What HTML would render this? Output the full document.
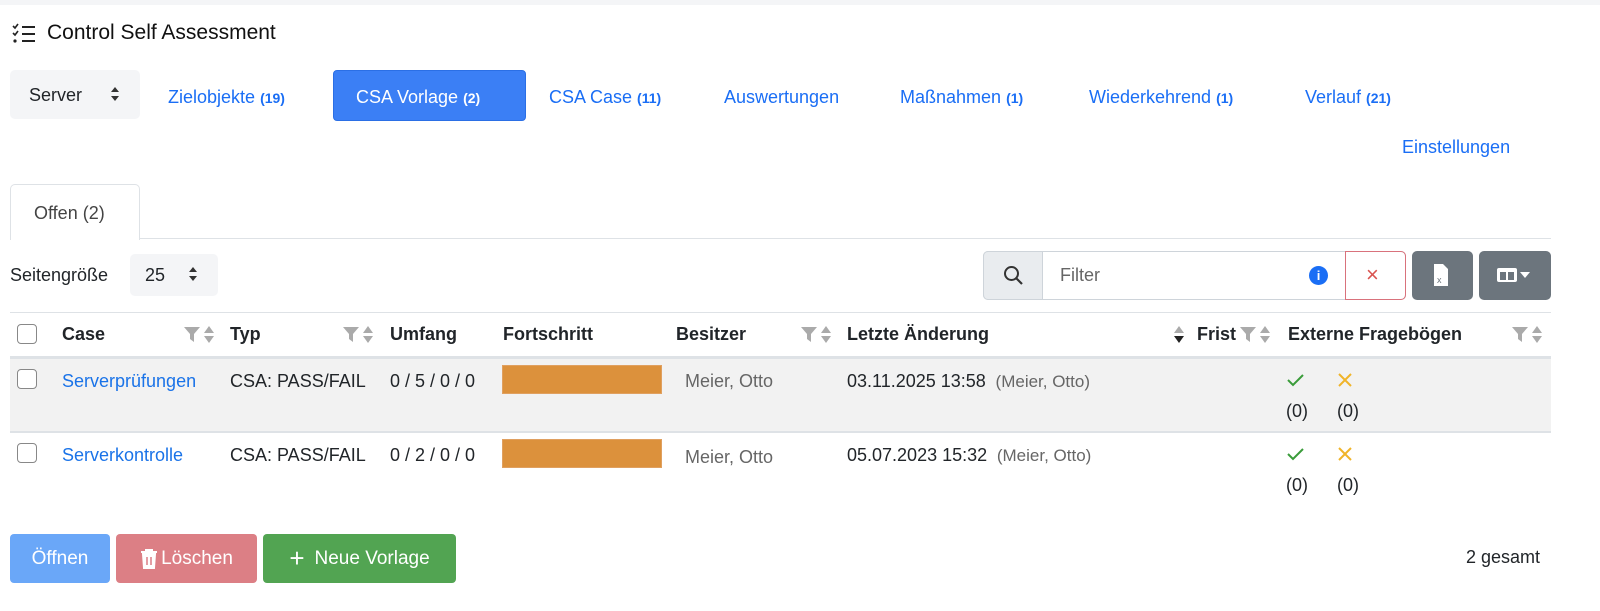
<!DOCTYPE html>
<html><head><meta charset="utf-8"><style>
*{box-sizing:border-box;margin:0;padding:0}
body{width:1600px;height:611px;background:#fff;font-family:"Liberation Sans",Arial,sans-serif;color:#212529;position:relative;overflow:hidden;font-size:18px}
.a{position:absolute;white-space:nowrap}
.blue{color:#1a73e8}
.nav{color:#1a6ef5;font-size:18px}
.nav b{font-size:14px}
.th{font-weight:bold;font-size:18px}
.cb{position:absolute;width:20px;height:20px;border:1.5px solid #888;border-radius:4px;background:#fff}
.btn{position:absolute;border-radius:4px;color:#fff;font-size:19px;display:flex;align-items:center;justify-content:center}
</style></head><body>
<div class="a" style="left:0;top:0;width:1600px;height:5px;background:#f4f5f7"></div>
<svg class="a" style="left:12px;top:23px" width="26" height="22" viewBox="0 0 26 22"><path d="M1 3l2 2 3-4M1 10l2 2 3-4" stroke="#222" stroke-width="1.6" fill="none"/><circle cx="3" cy="18" r="1.6" fill="#222"/><path d="M10 4h13M10 11h13M10 18h13" stroke="#222" stroke-width="2"/></svg>
<div class="a" style="left:47px;top:21px;font-size:21px;color:#111">Control Self Assessment</div>

<div class="a" style="left:10px;top:70px;width:130px;height:49px;background:#f4f5f7;border-radius:5px"></div>
<div class="a" style="left:29px;top:85px">Server</div>
<svg class="a" style="left:109px;top:86px" width="12" height="16"><path d="M6 1l4 5H2zM6 15l4-5H2z" fill="#333"/></svg>
<div class="a nav" style="left:168px;top:87px">Zielobjekte <b>(19)</b></div>
<div class="a" style="left:333px;top:70px;width:193px;height:51px;background:#3b7ff5;border-radius:4px;border:1px solid #2b6fe5"></div>
<div class="a" style="left:356px;top:87px;color:#fff">CSA Vorlage <b style="font-size:14px">(2)</b></div>
<div class="a nav" style="left:549px;top:87px">CSA Case <b>(11)</b></div>
<div class="a nav" style="left:724px;top:87px">Auswertungen</div>
<div class="a nav" style="left:900px;top:87px">Maßnahmen <b>(1)</b></div>
<div class="a nav" style="left:1089px;top:87px">Wiederkehrend <b>(1)</b></div>
<div class="a nav" style="left:1305px;top:87px">Verlauf <b>(21)</b></div>
<div class="a nav" style="left:1402px;top:137px">Einstellungen</div>

<div class="a" style="left:10px;top:238px;width:1541px;height:1px;background:#dee2e6"></div>
<div class="a" style="left:10px;top:184px;width:130px;height:56px;border:1px solid #dee2e6;border-bottom:none;border-radius:5px 5px 0 0;background:#fff"></div>
<div class="a" style="left:34px;top:203px;color:#444">Offen (2)</div>

<div class="a" style="left:10px;top:265px">Seitengröße</div>
<div class="a" style="left:130px;top:254px;width:88px;height:42px;background:#f4f5f7;border-radius:5px"></div>
<div class="a" style="left:145px;top:265px">25</div>
<svg class="a" style="left:187px;top:266px" width="12" height="16"><path d="M6 1l4 5H2zM6 15l4-5H2z" fill="#333"/></svg>

<div class="a" style="left:983px;top:251px;width:423px;height:49px;border:1px solid #ced4da;border-radius:5px;background:#fff"></div>
<div class="a" style="left:983px;top:251px;width:60px;height:49px;background:#e9ecef;border:1px solid #ced4da;border-radius:5px 0 0 5px"></div>
<svg class="a" style="left:1003px;top:265px" width="22" height="22"><circle cx="8.5" cy="8.5" r="6.5" stroke="#333" stroke-width="2" fill="none"/><path d="M13 13l6 6" stroke="#333" stroke-width="2.2"/></svg>
<div class="a" style="left:1060px;top:265px;color:#666">Filter</div>
<div class="a" style="left:1309px;top:266px;width:19px;height:19px;border-radius:50%;background:#1a6ef5;color:#fff;font-size:13px;font-weight:bold;text-align:center;line-height:19px">i</div>
<div class="a" style="left:1345px;top:251px;width:61px;height:49px;border:1px solid #d9727c;border-radius:0 5px 5px 0"></div>
<div class="a" style="left:1366px;top:262px;color:#d9534f;font-size:22px">×</div>
<div class="a" style="left:1412px;top:251px;width:61px;height:49px;background:#6c757d;border-radius:5px"></div>
<svg class="a" style="left:1433px;top:263px" width="16" height="24"><path d="M1 1h9l5 5v17H1z" fill="#fff"/><text x="4" y="20" font-size="9" fill="#6c757d" font-family="Liberation Sans">x</text></svg>
<div class="a" style="left:1479px;top:251px;width:72px;height:49px;background:#6c757d;border-radius:5px"></div>
<svg class="a" style="left:1496px;top:266px" width="40" height="18"><rect x="1" y="2" width="20" height="14" rx="2" fill="#fff"/><rect x="4" y="6" width="6" height="8" fill="#6c757d"/><rect x="12" y="6" width="6" height="8" fill="#6c757d"/><path d="M24 6h10l-5 6z" fill="#fff"/></svg>

<div class="a" style="left:10px;top:312px;width:1541px;height:1px;background:#dee2e6"></div>
<div class="cb" style="left:17px;top:324px"></div>
<div class="a th" style="left:62px;top:324px">Case</div>
<div class="a th" style="left:230px;top:324px">Typ</div>
<div class="a th" style="left:390px;top:324px">Umfang</div>
<div class="a th" style="left:503px;top:324px">Fortschritt</div>
<div class="a th" style="left:676px;top:324px">Besitzer</div>
<div class="a th" style="left:847px;top:324px">Letzte Änderung</div>
<div class="a th" style="left:1197px;top:324px">Frist</div>
<div class="a th" style="left:1288px;top:324px">Externe Fragebögen</div>
<svg class="a" style="left:184px;top:326px" width="38" height="18"><path d="M0 1h16l-6 7v8l-4-3V8z" fill="#aaa"/><path d="M25 0l5 7H20zM25 17l5-7H20z" fill="#aaa"/></svg>
<svg class="a" style="left:343px;top:326px" width="38" height="18"><path d="M0 1h16l-6 7v8l-4-3V8z" fill="#aaa"/><path d="M25 0l5 7H20zM25 17l5-7H20z" fill="#aaa"/></svg>
<svg class="a" style="left:801px;top:326px" width="38" height="18"><path d="M0 1h16l-6 7v8l-4-3V8z" fill="#aaa"/><path d="M25 0l5 7H20zM25 17l5-7H20z" fill="#aaa"/></svg>
<svg class="a" style="left:1173px;top:326px" width="14" height="18"><path d="M6 0l5 7H1z" fill="#aaa"/><path d="M6 17l5-7H1z" fill="#222"/></svg>
<svg class="a" style="left:1240px;top:326px" width="38" height="18"><path d="M0 1h16l-6 7v8l-4-3V8z" fill="#aaa"/><path d="M25 0l5 7H20zM25 17l5-7H20z" fill="#aaa"/></svg>
<svg class="a" style="left:1512px;top:326px" width="38" height="18"><path d="M0 1h16l-6 7v8l-4-3V8z" fill="#aaa"/><path d="M25 0l5 7H20zM25 17l5-7H20z" fill="#aaa"/></svg>

<div class="a" style="left:10px;top:356px;width:1541px;height:3px;background:#dee2e6"></div>
<div class="a" style="left:10px;top:359px;width:1541px;height:72px;background:#f2f2f2"></div>
<div class="a" style="left:10px;top:431px;width:1541px;height:2px;background:#dee2e6"></div>

<div class="cb" style="left:17px;top:369px"></div>
<div class="a blue" style="left:62px;top:371px">Serverprüfungen</div>
<div class="a" style="left:230px;top:371px">CSA: PASS/FAIL</div>
<div class="a" style="left:390px;top:371px">0 / 5 / 0 / 0</div>
<div class="a" style="left:502px;top:365px;width:160px;height:29px;background:#dc913c;border:1px solid #e0a060"></div>
<div class="a" style="left:685px;top:371px;color:#666">Meier, Otto</div>
<div class="a" style="left:847px;top:371px">03.11.2025 13:58 <span style="color:#666;font-size:17px">&nbsp;(Meier, Otto)</span></div>
<svg class="a" style="left:1287px;top:373px" width="18" height="14"><path d="M1 7l5 5 10-10" stroke="#3a9c3a" stroke-width="2" fill="none"/></svg>
<svg class="a" style="left:1338px;top:373px" width="14" height="14"><path d="M1 1l12 12M13 1L1 13" stroke="#f0b429" stroke-width="2"/></svg>
<div class="a" style="left:1286px;top:401px">(0)</div>
<div class="a" style="left:1337px;top:401px">(0)</div>

<div class="cb" style="left:17px;top:443px"></div>
<div class="a blue" style="left:62px;top:445px">Serverkontrolle</div>
<div class="a" style="left:230px;top:445px">CSA: PASS/FAIL</div>
<div class="a" style="left:390px;top:445px">0 / 2 / 0 / 0</div>
<div class="a" style="left:502px;top:439px;width:160px;height:29px;background:#dc913c;border:1px solid #e0a060"></div>
<div class="a" style="left:685px;top:447px;color:#666">Meier, Otto</div>
<div class="a" style="left:847px;top:445px">05.07.2023 15:32 <span style="color:#666;font-size:17px">&nbsp;(Meier, Otto)</span></div>
<svg class="a" style="left:1287px;top:447px" width="18" height="14"><path d="M1 7l5 5 10-10" stroke="#3a9c3a" stroke-width="2" fill="none"/></svg>
<svg class="a" style="left:1338px;top:447px" width="14" height="14"><path d="M1 1l12 12M13 1L1 13" stroke="#f0b429" stroke-width="2"/></svg>
<div class="a" style="left:1286px;top:475px">(0)</div>
<div class="a" style="left:1337px;top:475px">(0)</div>

<div class="btn" style="left:10px;top:534px;width:100px;height:49px;background:#6aa7f8">Öffnen</div>
<div class="btn" style="left:116px;top:534px;width:141px;height:49px;background:#dc7f85"><svg width="18" height="20" style="margin-right:3px"><path d="M1 3h16M6 3V1h6v2M3 5h12l-1 14H4z" stroke="#fff" stroke-width="2" fill="#fff"/><path d="M7 8v8M11 8v8" stroke="#dc7f85" stroke-width="1.5"/></svg>Löschen</div>
<div class="btn" style="left:263px;top:534px;width:193px;height:49px;background:#52a452"><span style="font-size:26px;margin-right:10px;font-weight:300">+</span>Neue Vorlage</div>
<div class="a" style="left:1466px;top:547px">2 gesamt</div>
</body></html>
